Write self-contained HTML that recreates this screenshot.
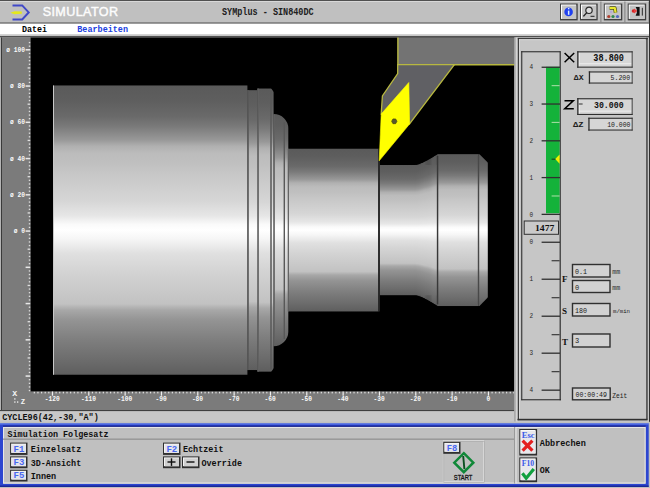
<!DOCTYPE html>
<html><head><meta charset="utf-8"><style>
html,body{margin:0;padding:0;width:650px;height:488px;overflow:hidden;background:#c0c0c0}
svg{display:block}
</style></head><body>
<svg width="650" height="488" viewBox="0 0 650 488">
<rect x="0" y="0" width="650" height="488" fill="#c0c0c0"/>
<rect x="0" y="0" width="650" height="1" fill="#505050"/>
<rect x="0" y="1" width="650" height="1" fill="#d8d8d8"/>
<rect x="0" y="22.5" width="650" height="1.2" fill="#505050"/>
<path d="M12.5 5.4 H22.2 L28.7 12.4 L22.2 19.4 H12.5" fill="none" stroke="#4048c8" stroke-width="2"/>
<path d="M10.3 12.7 L14.5 11.2 L21.8 11.6 L21.8 13.8 L14.5 14.2 Z" fill="#e4e81c"/>
<text x="42.7" y="16" font-size="12.6" fill="#fcfcfc" font-family="Liberation Sans" textLength="75.3" lengthAdjust="spacing" stroke="#fcfcfc" stroke-width="0.45">SIMULATOR</text>
<text x="222" y="15" font-size="10.6" fill="#202020" font-family="Liberation Mono" font-weight="bold" textLength="91.6" lengthAdjust="spacingAndGlyphs" >SYMplus - SIN840DC</text>
<rect x="560" y="3.5" width="17.700000000000045" height="16.9" fill="#404040"/>
<rect x="561" y="4.5" width="15.200000000000045" height="14.399999999999999" fill="#ffffff"/>
<rect x="562" y="5.5" width="14.200000000000045" height="13.399999999999999" fill="#c4c4c4"/>
<rect x="580" y="3.5" width="17.700000000000045" height="16.9" fill="#404040"/>
<rect x="581" y="4.5" width="15.200000000000045" height="14.399999999999999" fill="#ffffff"/>
<rect x="582" y="5.5" width="14.200000000000045" height="13.399999999999999" fill="#c4c4c4"/>
<rect x="603.8" y="3.5" width="18.5" height="16.9" fill="#404040"/>
<rect x="604.8" y="4.5" width="16.0" height="14.399999999999999" fill="#ffffff"/>
<rect x="605.8" y="5.5" width="15.0" height="13.399999999999999" fill="#c4c4c4"/>
<rect x="627.7" y="3.5" width="18.5" height="16.9" fill="#404040"/>
<rect x="628.7" y="4.5" width="16.0" height="14.399999999999999" fill="#ffffff"/>
<rect x="629.7" y="5.5" width="15.0" height="13.399999999999999" fill="#c4c4c4"/>
<rect x="600.4" y="1.5" width="1" height="21" fill="#808080"/>
<rect x="624.4" y="1.5" width="1" height="21" fill="#808080"/>
<rect x="648.5" y="1.5" width="1" height="21" fill="#808080"/>
<circle cx="568.6" cy="11.9" r="4.3" fill="#2040f0"/>
<rect x="567.9" y="10.6" width="1.5" height="4.2" fill="#d8ecff"/><rect x="567.9" y="7.9" width="1.5" height="1.4" fill="#d8ecff"/>
<circle cx="589" cy="10.3" r="3.2" fill="#dcdcdc" stroke="#282828" stroke-width="1.2"/>
<path d="M586.8 12.6 L583.4 16.4" stroke="#202020" stroke-width="1.4"/>
<rect x="590.5" y="15.8" width="4" height="1" fill="#202020"/>
<path d="M609.6 8 H614.8 L615.6 12.6" fill="none" stroke="#505010" stroke-width="3.6" stroke-linejoin="round"/>
<path d="M609.6 8 H614.8 L615.6 12.6" fill="none" stroke="#e8e830" stroke-width="2.2" stroke-linejoin="round"/>
<ellipse cx="608.8" cy="16.5" rx="1.6" ry="1.5" fill="#b04030"/><ellipse cx="613" cy="16.5" rx="1.6" ry="1.5" fill="#308850"/><ellipse cx="617.5" cy="16.5" rx="1.6" ry="1.5" fill="#5068c0"/><circle cx="611" cy="12" r="1.2" fill="#b8a8d8"/>
<circle cx="633.4" cy="11" r="1.7" fill="#d82828"/><polygon points="634,8.6 637.4,11 634,13.4" fill="#e84040"/>
<path d="M635.6 7.1 H639.6 V15.7 H635.6 Q638.6 11.4 635.6 7.1 Z" fill="#101010"/>
<rect x="641.8" y="7.8" width="1.1" height="7.8" fill="#383838"/>
<rect x="0" y="23.7" width="650" height="10.8" fill="#ffffff"/>
<text x="22" y="32" font-size="9.5" fill="#000" font-family="Liberation Mono" font-weight="bold" textLength="25" lengthAdjust="spacingAndGlyphs" >Datei</text>
<text x="77.3" y="32" font-size="9.5" fill="#2040e0" font-family="Liberation Mono" font-weight="bold" textLength="50.7" lengthAdjust="spacingAndGlyphs" >Bearbeiten</text>
<rect x="0" y="34.5" width="650" height="1.5" fill="#c8c8c8"/>
<rect x="0" y="36" width="650" height="1.5" fill="#505050"/>
<rect x="0" y="37.5" width="30.5" height="373" fill="#7b7b7b"/>
<rect x="0" y="391.5" width="514.5" height="19" fill="#7b7b7b"/>
<rect x="0" y="37.5" width="1" height="373" fill="#b4b4b4"/>
<rect x="1" y="37.5" width="1" height="373" fill="#3a3a3a"/>
<rect x="30.5" y="37.5" width="484" height="354" fill="#000"/>
<rect x="0" y="410" width="514.5" height="1.3" fill="#404040"/>
<rect x="0" y="411.3" width="514.5" height="10.5" fill="#c8c8c8"/>
<text x="2.2" y="419.5" font-size="9.5" fill="#101010" font-family="Liberation Mono" font-weight="bold" textLength="96.6" lengthAdjust="spacingAndGlyphs" >CYCLE96(42,-30,"A")</text>
<rect x="28.8" y="389.93" width="1.4" height="1.3" fill="#e0e0e0"/>
<rect x="28.8" y="386.30" width="1.4" height="1.3" fill="#e0e0e0"/>
<rect x="28.8" y="382.68" width="1.4" height="1.3" fill="#e0e0e0"/>
<rect x="28.8" y="379.05" width="1.4" height="1.3" fill="#e0e0e0"/>
<rect x="25.6" y="375.33" width="4.6" height="1.5" fill="#e8e8e8"/>
<rect x="28.8" y="371.80" width="1.4" height="1.3" fill="#e0e0e0"/>
<rect x="28.8" y="368.18" width="1.4" height="1.3" fill="#e0e0e0"/>
<rect x="28.8" y="364.55" width="1.4" height="1.3" fill="#e0e0e0"/>
<rect x="28.8" y="360.93" width="1.4" height="1.3" fill="#e0e0e0"/>
<rect x="27.6" y="357.30" width="2.6" height="1.3" fill="#e0e0e0"/>
<rect x="28.8" y="353.68" width="1.4" height="1.3" fill="#e0e0e0"/>
<rect x="28.8" y="350.05" width="1.4" height="1.3" fill="#e0e0e0"/>
<rect x="28.8" y="346.43" width="1.4" height="1.3" fill="#e0e0e0"/>
<rect x="28.8" y="342.80" width="1.4" height="1.3" fill="#e0e0e0"/>
<rect x="25.6" y="339.08" width="4.6" height="1.5" fill="#e8e8e8"/>
<rect x="28.8" y="335.55" width="1.4" height="1.3" fill="#e0e0e0"/>
<rect x="28.8" y="331.93" width="1.4" height="1.3" fill="#e0e0e0"/>
<rect x="28.8" y="328.30" width="1.4" height="1.3" fill="#e0e0e0"/>
<rect x="28.8" y="324.68" width="1.4" height="1.3" fill="#e0e0e0"/>
<rect x="27.6" y="321.05" width="2.6" height="1.3" fill="#e0e0e0"/>
<rect x="28.8" y="317.42" width="1.4" height="1.3" fill="#e0e0e0"/>
<rect x="28.8" y="313.80" width="1.4" height="1.3" fill="#e0e0e0"/>
<rect x="28.8" y="310.17" width="1.4" height="1.3" fill="#e0e0e0"/>
<rect x="28.8" y="306.55" width="1.4" height="1.3" fill="#e0e0e0"/>
<rect x="25.6" y="302.82" width="4.6" height="1.5" fill="#e8e8e8"/>
<rect x="28.8" y="299.30" width="1.4" height="1.3" fill="#e0e0e0"/>
<rect x="28.8" y="295.67" width="1.4" height="1.3" fill="#e0e0e0"/>
<rect x="28.8" y="292.05" width="1.4" height="1.3" fill="#e0e0e0"/>
<rect x="28.8" y="288.42" width="1.4" height="1.3" fill="#e0e0e0"/>
<rect x="27.6" y="284.80" width="2.6" height="1.3" fill="#e0e0e0"/>
<rect x="28.8" y="281.17" width="1.4" height="1.3" fill="#e0e0e0"/>
<rect x="28.8" y="277.55" width="1.4" height="1.3" fill="#e0e0e0"/>
<rect x="28.8" y="273.92" width="1.4" height="1.3" fill="#e0e0e0"/>
<rect x="28.8" y="270.30" width="1.4" height="1.3" fill="#e0e0e0"/>
<rect x="25.6" y="266.57" width="4.6" height="1.5" fill="#e8e8e8"/>
<rect x="28.8" y="263.05" width="1.4" height="1.3" fill="#e0e0e0"/>
<rect x="28.8" y="259.42" width="1.4" height="1.3" fill="#e0e0e0"/>
<rect x="28.8" y="255.80" width="1.4" height="1.3" fill="#e0e0e0"/>
<rect x="28.8" y="252.17" width="1.4" height="1.3" fill="#e0e0e0"/>
<rect x="27.6" y="248.55" width="2.6" height="1.3" fill="#e0e0e0"/>
<rect x="28.8" y="244.92" width="1.4" height="1.3" fill="#e0e0e0"/>
<rect x="28.8" y="241.30" width="1.4" height="1.3" fill="#e0e0e0"/>
<rect x="28.8" y="237.67" width="1.4" height="1.3" fill="#e0e0e0"/>
<rect x="28.8" y="234.05" width="1.4" height="1.3" fill="#e0e0e0"/>
<rect x="25.6" y="230.32" width="4.6" height="1.5" fill="#e8e8e8"/>
<rect x="28.8" y="226.79" width="1.4" height="1.3" fill="#e0e0e0"/>
<rect x="28.8" y="223.17" width="1.4" height="1.3" fill="#e0e0e0"/>
<rect x="28.8" y="219.54" width="1.4" height="1.3" fill="#e0e0e0"/>
<rect x="28.8" y="215.92" width="1.4" height="1.3" fill="#e0e0e0"/>
<rect x="27.6" y="212.29" width="2.6" height="1.3" fill="#e0e0e0"/>
<rect x="28.8" y="208.67" width="1.4" height="1.3" fill="#e0e0e0"/>
<rect x="28.8" y="205.04" width="1.4" height="1.3" fill="#e0e0e0"/>
<rect x="28.8" y="201.42" width="1.4" height="1.3" fill="#e0e0e0"/>
<rect x="28.8" y="197.79" width="1.4" height="1.3" fill="#e0e0e0"/>
<rect x="25.6" y="194.07" width="4.6" height="1.5" fill="#e8e8e8"/>
<rect x="28.8" y="190.54" width="1.4" height="1.3" fill="#e0e0e0"/>
<rect x="28.8" y="186.92" width="1.4" height="1.3" fill="#e0e0e0"/>
<rect x="28.8" y="183.29" width="1.4" height="1.3" fill="#e0e0e0"/>
<rect x="28.8" y="179.67" width="1.4" height="1.3" fill="#e0e0e0"/>
<rect x="27.6" y="176.04" width="2.6" height="1.3" fill="#e0e0e0"/>
<rect x="28.8" y="172.42" width="1.4" height="1.3" fill="#e0e0e0"/>
<rect x="28.8" y="168.79" width="1.4" height="1.3" fill="#e0e0e0"/>
<rect x="28.8" y="165.17" width="1.4" height="1.3" fill="#e0e0e0"/>
<rect x="28.8" y="161.54" width="1.4" height="1.3" fill="#e0e0e0"/>
<rect x="25.6" y="157.82" width="4.6" height="1.5" fill="#e8e8e8"/>
<rect x="28.8" y="154.29" width="1.4" height="1.3" fill="#e0e0e0"/>
<rect x="28.8" y="150.67" width="1.4" height="1.3" fill="#e0e0e0"/>
<rect x="28.8" y="147.04" width="1.4" height="1.3" fill="#e0e0e0"/>
<rect x="28.8" y="143.42" width="1.4" height="1.3" fill="#e0e0e0"/>
<rect x="27.6" y="139.79" width="2.6" height="1.3" fill="#e0e0e0"/>
<rect x="28.8" y="136.16" width="1.4" height="1.3" fill="#e0e0e0"/>
<rect x="28.8" y="132.54" width="1.4" height="1.3" fill="#e0e0e0"/>
<rect x="28.8" y="128.91" width="1.4" height="1.3" fill="#e0e0e0"/>
<rect x="28.8" y="125.29" width="1.4" height="1.3" fill="#e0e0e0"/>
<rect x="25.6" y="121.56" width="4.6" height="1.5" fill="#e8e8e8"/>
<rect x="28.8" y="118.04" width="1.4" height="1.3" fill="#e0e0e0"/>
<rect x="28.8" y="114.41" width="1.4" height="1.3" fill="#e0e0e0"/>
<rect x="28.8" y="110.79" width="1.4" height="1.3" fill="#e0e0e0"/>
<rect x="28.8" y="107.16" width="1.4" height="1.3" fill="#e0e0e0"/>
<rect x="27.6" y="103.54" width="2.6" height="1.3" fill="#e0e0e0"/>
<rect x="28.8" y="99.91" width="1.4" height="1.3" fill="#e0e0e0"/>
<rect x="28.8" y="96.29" width="1.4" height="1.3" fill="#e0e0e0"/>
<rect x="28.8" y="92.66" width="1.4" height="1.3" fill="#e0e0e0"/>
<rect x="28.8" y="89.04" width="1.4" height="1.3" fill="#e0e0e0"/>
<rect x="25.6" y="85.31" width="4.6" height="1.5" fill="#e8e8e8"/>
<rect x="28.8" y="81.79" width="1.4" height="1.3" fill="#e0e0e0"/>
<rect x="28.8" y="78.16" width="1.4" height="1.3" fill="#e0e0e0"/>
<rect x="28.8" y="74.54" width="1.4" height="1.3" fill="#e0e0e0"/>
<rect x="28.8" y="70.91" width="1.4" height="1.3" fill="#e0e0e0"/>
<rect x="27.6" y="67.29" width="2.6" height="1.3" fill="#e0e0e0"/>
<rect x="28.8" y="63.66" width="1.4" height="1.3" fill="#e0e0e0"/>
<rect x="28.8" y="60.04" width="1.4" height="1.3" fill="#e0e0e0"/>
<rect x="28.8" y="56.41" width="1.4" height="1.3" fill="#e0e0e0"/>
<rect x="28.8" y="52.79" width="1.4" height="1.3" fill="#e0e0e0"/>
<rect x="25.6" y="49.06" width="4.6" height="1.5" fill="#e8e8e8"/>
<rect x="28.8" y="45.53" width="1.4" height="1.3" fill="#e0e0e0"/>
<rect x="28.8" y="41.91" width="1.4" height="1.3" fill="#e0e0e0"/>
<text x="6.25" y="51.81" font-size="7.3" fill="#fafafa" font-family="Liberation Mono" font-weight="bold" textLength="18.75" lengthAdjust="spacingAndGlyphs" >ø 100</text>
<text x="10.0" y="88.06199999999998" font-size="7.3" fill="#fafafa" font-family="Liberation Mono" font-weight="bold" textLength="15.0" lengthAdjust="spacingAndGlyphs" >ø 80</text>
<text x="10.0" y="124.314" font-size="7.3" fill="#fafafa" font-family="Liberation Mono" font-weight="bold" textLength="15.0" lengthAdjust="spacingAndGlyphs" >ø 60</text>
<text x="10.0" y="160.56599999999997" font-size="7.3" fill="#fafafa" font-family="Liberation Mono" font-weight="bold" textLength="15.0" lengthAdjust="spacingAndGlyphs" >ø 40</text>
<text x="10.0" y="196.81799999999998" font-size="7.3" fill="#fafafa" font-family="Liberation Mono" font-weight="bold" textLength="15.0" lengthAdjust="spacingAndGlyphs" >ø 20</text>
<text x="13.75" y="233.07" font-size="7.3" fill="#fafafa" font-family="Liberation Mono" font-weight="bold" textLength="11.25" lengthAdjust="spacingAndGlyphs" >ø 0</text>
<text x="12.3" y="396.2" font-size="7.5" fill="#f4f4f4" font-family="Liberation Mono" font-weight="bold" textLength="5" lengthAdjust="spacingAndGlyphs" >X</text>
<text x="20.8" y="403.6" font-size="7.5" fill="#f4f4f4" font-family="Liberation Mono" font-weight="bold" textLength="4.4" lengthAdjust="spacingAndGlyphs" >Z</text>
<rect x="14.2" y="398.3" width="1.3" height="1.3" fill="#f4f4f4"/><rect x="14.2" y="401.4" width="1.3" height="1.3" fill="#f4f4f4"/><rect x="17" y="401.4" width="1.3" height="1.3" fill="#f4f4f4"/>
<rect x="33.71" y="391.8" width="1.2" height="1.6" fill="#e0e0e0"/>
<rect x="37.35" y="391.8" width="1.2" height="1.6" fill="#e0e0e0"/>
<rect x="40.98" y="391.8" width="1.2" height="1.6" fill="#e0e0e0"/>
<rect x="44.61" y="391.8" width="1.2" height="1.6" fill="#e0e0e0"/>
<rect x="48.24" y="391.8" width="1.2" height="1.6" fill="#e0e0e0"/>
<rect x="51.88" y="391.5" width="1.2" height="4.2" fill="#f0f0f0"/>
<rect x="55.51" y="391.8" width="1.2" height="1.6" fill="#e0e0e0"/>
<rect x="59.14" y="391.8" width="1.2" height="1.6" fill="#e0e0e0"/>
<rect x="62.78" y="391.8" width="1.2" height="1.6" fill="#e0e0e0"/>
<rect x="66.41" y="391.8" width="1.2" height="1.6" fill="#e0e0e0"/>
<rect x="70.04" y="391.8" width="1.2" height="1.6" fill="#e0e0e0"/>
<rect x="73.68" y="391.8" width="1.2" height="1.6" fill="#e0e0e0"/>
<rect x="77.31" y="391.8" width="1.2" height="1.6" fill="#e0e0e0"/>
<rect x="80.94" y="391.8" width="1.2" height="1.6" fill="#e0e0e0"/>
<rect x="84.58" y="391.8" width="1.2" height="1.6" fill="#e0e0e0"/>
<rect x="88.21" y="391.5" width="1.2" height="4.2" fill="#f0f0f0"/>
<rect x="91.84" y="391.8" width="1.2" height="1.6" fill="#e0e0e0"/>
<rect x="95.48" y="391.8" width="1.2" height="1.6" fill="#e0e0e0"/>
<rect x="99.11" y="391.8" width="1.2" height="1.6" fill="#e0e0e0"/>
<rect x="102.74" y="391.8" width="1.2" height="1.6" fill="#e0e0e0"/>
<rect x="106.37" y="391.8" width="1.2" height="1.6" fill="#e0e0e0"/>
<rect x="110.01" y="391.8" width="1.2" height="1.6" fill="#e0e0e0"/>
<rect x="113.64" y="391.8" width="1.2" height="1.6" fill="#e0e0e0"/>
<rect x="117.27" y="391.8" width="1.2" height="1.6" fill="#e0e0e0"/>
<rect x="120.91" y="391.8" width="1.2" height="1.6" fill="#e0e0e0"/>
<rect x="124.54" y="391.5" width="1.2" height="4.2" fill="#f0f0f0"/>
<rect x="128.17" y="391.8" width="1.2" height="1.6" fill="#e0e0e0"/>
<rect x="131.81" y="391.8" width="1.2" height="1.6" fill="#e0e0e0"/>
<rect x="135.44" y="391.8" width="1.2" height="1.6" fill="#e0e0e0"/>
<rect x="139.07" y="391.8" width="1.2" height="1.6" fill="#e0e0e0"/>
<rect x="142.71" y="391.8" width="1.2" height="1.6" fill="#e0e0e0"/>
<rect x="146.34" y="391.8" width="1.2" height="1.6" fill="#e0e0e0"/>
<rect x="149.97" y="391.8" width="1.2" height="1.6" fill="#e0e0e0"/>
<rect x="153.60" y="391.8" width="1.2" height="1.6" fill="#e0e0e0"/>
<rect x="157.24" y="391.8" width="1.2" height="1.6" fill="#e0e0e0"/>
<rect x="160.87" y="391.5" width="1.2" height="4.2" fill="#f0f0f0"/>
<rect x="164.50" y="391.8" width="1.2" height="1.6" fill="#e0e0e0"/>
<rect x="168.14" y="391.8" width="1.2" height="1.6" fill="#e0e0e0"/>
<rect x="171.77" y="391.8" width="1.2" height="1.6" fill="#e0e0e0"/>
<rect x="175.40" y="391.8" width="1.2" height="1.6" fill="#e0e0e0"/>
<rect x="179.04" y="391.8" width="1.2" height="1.6" fill="#e0e0e0"/>
<rect x="182.67" y="391.8" width="1.2" height="1.6" fill="#e0e0e0"/>
<rect x="186.30" y="391.8" width="1.2" height="1.6" fill="#e0e0e0"/>
<rect x="189.94" y="391.8" width="1.2" height="1.6" fill="#e0e0e0"/>
<rect x="193.57" y="391.8" width="1.2" height="1.6" fill="#e0e0e0"/>
<rect x="197.20" y="391.5" width="1.2" height="4.2" fill="#f0f0f0"/>
<rect x="200.84" y="391.8" width="1.2" height="1.6" fill="#e0e0e0"/>
<rect x="204.47" y="391.8" width="1.2" height="1.6" fill="#e0e0e0"/>
<rect x="208.10" y="391.8" width="1.2" height="1.6" fill="#e0e0e0"/>
<rect x="211.73" y="391.8" width="1.2" height="1.6" fill="#e0e0e0"/>
<rect x="215.37" y="391.8" width="1.2" height="1.6" fill="#e0e0e0"/>
<rect x="219.00" y="391.8" width="1.2" height="1.6" fill="#e0e0e0"/>
<rect x="222.63" y="391.8" width="1.2" height="1.6" fill="#e0e0e0"/>
<rect x="226.27" y="391.8" width="1.2" height="1.6" fill="#e0e0e0"/>
<rect x="229.90" y="391.8" width="1.2" height="1.6" fill="#e0e0e0"/>
<rect x="233.53" y="391.5" width="1.2" height="4.2" fill="#f0f0f0"/>
<rect x="237.17" y="391.8" width="1.2" height="1.6" fill="#e0e0e0"/>
<rect x="240.80" y="391.8" width="1.2" height="1.6" fill="#e0e0e0"/>
<rect x="244.43" y="391.8" width="1.2" height="1.6" fill="#e0e0e0"/>
<rect x="248.07" y="391.8" width="1.2" height="1.6" fill="#e0e0e0"/>
<rect x="251.70" y="391.8" width="1.2" height="1.6" fill="#e0e0e0"/>
<rect x="255.33" y="391.8" width="1.2" height="1.6" fill="#e0e0e0"/>
<rect x="258.96" y="391.8" width="1.2" height="1.6" fill="#e0e0e0"/>
<rect x="262.60" y="391.8" width="1.2" height="1.6" fill="#e0e0e0"/>
<rect x="266.23" y="391.8" width="1.2" height="1.6" fill="#e0e0e0"/>
<rect x="269.86" y="391.5" width="1.2" height="4.2" fill="#f0f0f0"/>
<rect x="273.50" y="391.8" width="1.2" height="1.6" fill="#e0e0e0"/>
<rect x="277.13" y="391.8" width="1.2" height="1.6" fill="#e0e0e0"/>
<rect x="280.76" y="391.8" width="1.2" height="1.6" fill="#e0e0e0"/>
<rect x="284.40" y="391.8" width="1.2" height="1.6" fill="#e0e0e0"/>
<rect x="288.03" y="391.8" width="1.2" height="1.6" fill="#e0e0e0"/>
<rect x="291.66" y="391.8" width="1.2" height="1.6" fill="#e0e0e0"/>
<rect x="295.30" y="391.8" width="1.2" height="1.6" fill="#e0e0e0"/>
<rect x="298.93" y="391.8" width="1.2" height="1.6" fill="#e0e0e0"/>
<rect x="302.56" y="391.8" width="1.2" height="1.6" fill="#e0e0e0"/>
<rect x="306.19" y="391.5" width="1.2" height="4.2" fill="#f0f0f0"/>
<rect x="309.83" y="391.8" width="1.2" height="1.6" fill="#e0e0e0"/>
<rect x="313.46" y="391.8" width="1.2" height="1.6" fill="#e0e0e0"/>
<rect x="317.09" y="391.8" width="1.2" height="1.6" fill="#e0e0e0"/>
<rect x="320.73" y="391.8" width="1.2" height="1.6" fill="#e0e0e0"/>
<rect x="324.36" y="391.8" width="1.2" height="1.6" fill="#e0e0e0"/>
<rect x="327.99" y="391.8" width="1.2" height="1.6" fill="#e0e0e0"/>
<rect x="331.63" y="391.8" width="1.2" height="1.6" fill="#e0e0e0"/>
<rect x="335.26" y="391.8" width="1.2" height="1.6" fill="#e0e0e0"/>
<rect x="338.89" y="391.8" width="1.2" height="1.6" fill="#e0e0e0"/>
<rect x="342.53" y="391.5" width="1.2" height="4.2" fill="#f0f0f0"/>
<rect x="346.16" y="391.8" width="1.2" height="1.6" fill="#e0e0e0"/>
<rect x="349.79" y="391.8" width="1.2" height="1.6" fill="#e0e0e0"/>
<rect x="353.43" y="391.8" width="1.2" height="1.6" fill="#e0e0e0"/>
<rect x="357.06" y="391.8" width="1.2" height="1.6" fill="#e0e0e0"/>
<rect x="360.69" y="391.8" width="1.2" height="1.6" fill="#e0e0e0"/>
<rect x="364.32" y="391.8" width="1.2" height="1.6" fill="#e0e0e0"/>
<rect x="367.96" y="391.8" width="1.2" height="1.6" fill="#e0e0e0"/>
<rect x="371.59" y="391.8" width="1.2" height="1.6" fill="#e0e0e0"/>
<rect x="375.22" y="391.8" width="1.2" height="1.6" fill="#e0e0e0"/>
<rect x="378.86" y="391.5" width="1.2" height="4.2" fill="#f0f0f0"/>
<rect x="382.49" y="391.8" width="1.2" height="1.6" fill="#e0e0e0"/>
<rect x="386.12" y="391.8" width="1.2" height="1.6" fill="#e0e0e0"/>
<rect x="389.76" y="391.8" width="1.2" height="1.6" fill="#e0e0e0"/>
<rect x="393.39" y="391.8" width="1.2" height="1.6" fill="#e0e0e0"/>
<rect x="397.02" y="391.8" width="1.2" height="1.6" fill="#e0e0e0"/>
<rect x="400.66" y="391.8" width="1.2" height="1.6" fill="#e0e0e0"/>
<rect x="404.29" y="391.8" width="1.2" height="1.6" fill="#e0e0e0"/>
<rect x="407.92" y="391.8" width="1.2" height="1.6" fill="#e0e0e0"/>
<rect x="411.55" y="391.8" width="1.2" height="1.6" fill="#e0e0e0"/>
<rect x="415.19" y="391.5" width="1.2" height="4.2" fill="#f0f0f0"/>
<rect x="418.82" y="391.8" width="1.2" height="1.6" fill="#e0e0e0"/>
<rect x="422.45" y="391.8" width="1.2" height="1.6" fill="#e0e0e0"/>
<rect x="426.09" y="391.8" width="1.2" height="1.6" fill="#e0e0e0"/>
<rect x="429.72" y="391.8" width="1.2" height="1.6" fill="#e0e0e0"/>
<rect x="433.35" y="391.8" width="1.2" height="1.6" fill="#e0e0e0"/>
<rect x="436.99" y="391.8" width="1.2" height="1.6" fill="#e0e0e0"/>
<rect x="440.62" y="391.8" width="1.2" height="1.6" fill="#e0e0e0"/>
<rect x="444.25" y="391.8" width="1.2" height="1.6" fill="#e0e0e0"/>
<rect x="447.89" y="391.8" width="1.2" height="1.6" fill="#e0e0e0"/>
<rect x="451.52" y="391.5" width="1.2" height="4.2" fill="#f0f0f0"/>
<rect x="455.15" y="391.8" width="1.2" height="1.6" fill="#e0e0e0"/>
<rect x="458.79" y="391.8" width="1.2" height="1.6" fill="#e0e0e0"/>
<rect x="462.42" y="391.8" width="1.2" height="1.6" fill="#e0e0e0"/>
<rect x="466.05" y="391.8" width="1.2" height="1.6" fill="#e0e0e0"/>
<rect x="469.68" y="391.8" width="1.2" height="1.6" fill="#e0e0e0"/>
<rect x="473.32" y="391.8" width="1.2" height="1.6" fill="#e0e0e0"/>
<rect x="476.95" y="391.8" width="1.2" height="1.6" fill="#e0e0e0"/>
<rect x="480.58" y="391.8" width="1.2" height="1.6" fill="#e0e0e0"/>
<rect x="484.22" y="391.8" width="1.2" height="1.6" fill="#e0e0e0"/>
<rect x="487.85" y="391.5" width="1.2" height="4.2" fill="#f0f0f0"/>
<rect x="491.48" y="391.8" width="1.2" height="1.6" fill="#e0e0e0"/>
<rect x="495.12" y="391.8" width="1.2" height="1.6" fill="#e0e0e0"/>
<rect x="498.75" y="391.8" width="1.2" height="1.6" fill="#e0e0e0"/>
<rect x="502.38" y="391.8" width="1.2" height="1.6" fill="#e0e0e0"/>
<rect x="506.02" y="391.8" width="1.2" height="1.6" fill="#e0e0e0"/>
<rect x="509.65" y="391.8" width="1.2" height="1.6" fill="#e0e0e0"/>
<rect x="513.28" y="391.8" width="1.2" height="1.6" fill="#e0e0e0"/>
<text x="44.677999999999955" y="400.6" font-size="7" fill="#f8f8f8" font-family="Liberation Mono" font-weight="bold" textLength="15.0" lengthAdjust="spacingAndGlyphs" >-120</text>
<text x="81.00899999999997" y="400.6" font-size="7" fill="#f8f8f8" font-family="Liberation Mono" font-weight="bold" textLength="15.0" lengthAdjust="spacingAndGlyphs" >-110</text>
<text x="117.33999999999999" y="400.6" font-size="7" fill="#f8f8f8" font-family="Liberation Mono" font-weight="bold" textLength="15.0" lengthAdjust="spacingAndGlyphs" >-100</text>
<text x="155.54599999999994" y="400.6" font-size="7" fill="#f8f8f8" font-family="Liberation Mono" font-weight="bold" textLength="11.25" lengthAdjust="spacingAndGlyphs" >-90</text>
<text x="191.87699999999995" y="400.6" font-size="7" fill="#f8f8f8" font-family="Liberation Mono" font-weight="bold" textLength="11.25" lengthAdjust="spacingAndGlyphs" >-80</text>
<text x="228.20799999999997" y="400.6" font-size="7" fill="#f8f8f8" font-family="Liberation Mono" font-weight="bold" textLength="11.25" lengthAdjust="spacingAndGlyphs" >-70</text>
<text x="264.53899999999993" y="400.6" font-size="7" fill="#f8f8f8" font-family="Liberation Mono" font-weight="bold" textLength="11.25" lengthAdjust="spacingAndGlyphs" >-60</text>
<text x="300.86999999999995" y="400.6" font-size="7" fill="#f8f8f8" font-family="Liberation Mono" font-weight="bold" textLength="11.25" lengthAdjust="spacingAndGlyphs" >-50</text>
<text x="337.20099999999996" y="400.6" font-size="7" fill="#f8f8f8" font-family="Liberation Mono" font-weight="bold" textLength="11.25" lengthAdjust="spacingAndGlyphs" >-40</text>
<text x="373.532" y="400.6" font-size="7" fill="#f8f8f8" font-family="Liberation Mono" font-weight="bold" textLength="11.25" lengthAdjust="spacingAndGlyphs" >-30</text>
<text x="409.863" y="400.6" font-size="7" fill="#f8f8f8" font-family="Liberation Mono" font-weight="bold" textLength="11.25" lengthAdjust="spacingAndGlyphs" >-20</text>
<text x="446.19399999999996" y="400.6" font-size="7" fill="#f8f8f8" font-family="Liberation Mono" font-weight="bold" textLength="11.25" lengthAdjust="spacingAndGlyphs" >-10</text>
<text x="486.575" y="400.6" font-size="7" fill="#f8f8f8" font-family="Liberation Mono" font-weight="bold" textLength="3.75" lengthAdjust="spacingAndGlyphs" >0</text>
<defs>
<linearGradient id="cyl" x1="0" y1="0" x2="0" y2="1">
<stop offset="0" stop-color="#5a5a5a"/>
<stop offset="0.05" stop-color="#5e5e5e"/>
<stop offset="0.108" stop-color="#6a6a6a"/>
<stop offset="0.142" stop-color="#7a7a7a"/>
<stop offset="0.188" stop-color="#989898"/>
<stop offset="0.21" stop-color="#b0b0b0"/>
<stop offset="0.235" stop-color="#bcbcbc"/>
<stop offset="0.27" stop-color="#c0c0c0"/>
<stop offset="0.30" stop-color="#c6c6c6"/>
<stop offset="0.40" stop-color="#d6d6d6"/>
<stop offset="0.45" stop-color="#e6e6e6"/>
<stop offset="0.48" stop-color="#fafafa"/>
<stop offset="0.50" stop-color="#ffffff"/>
<stop offset="0.53" stop-color="#f6f6f6"/>
<stop offset="0.58" stop-color="#e0e0e0"/>
<stop offset="0.64" stop-color="#d4d4d4"/>
<stop offset="0.755" stop-color="#c2c2c2"/>
<stop offset="0.776" stop-color="#a8a8a8"/>
<stop offset="0.81" stop-color="#949494"/>
<stop offset="0.88" stop-color="#7e7e7e"/>
<stop offset="0.95" stop-color="#6c6c6c"/>
<stop offset="1" stop-color="#5e5e5e"/>
</linearGradient>
</defs>
<rect x="53" y="85.46" width="194.40" height="289.28" fill="url(#cyl)"/>
<rect x="247.4" y="90.16" width="10.00" height="279.88" fill="url(#cyl)"/>
<rect x="257.4" y="88.53" width="16.20" height="283.13" fill="url(#cyl)"/>
<path d="M273.6 114.03 A14.7 14.3 0 0 1 288.3 128.33 V331.87 A14.7 14.3 0 0 1 273.6 346.17 Z" fill="url(#cyl)"/>
<rect x="288.4" y="148.74" width="90.10" height="162.72" fill="url(#cyl)"/>
<rect x="379.5" y="165.01" width="58.00" height="130.18" fill="url(#cyl)"/>
<rect x="437.5" y="154.16" width="41.00" height="151.87" fill="url(#cyl)"/>
<rect x="478.5" y="154.16" width="9.30" height="151.87" fill="url(#cyl)"/>
<rect x="53.00" y="85.46" width="1" height="289.28" fill="#c8c8c8"/>
<rect x="247.20" y="90.16" width="1.6" height="279.88" fill="#585858"/>
<rect x="257.35" y="88.53" width="1.5" height="283.13" fill="#606060"/>
<rect x="270.25" y="90.88" width="1.5" height="278.43" fill="#585858"/>
<rect x="273.35" y="114.39" width="1.5" height="231.42" fill="#606060"/>
<rect x="287.70" y="148.74" width="1.2" height="162.72" fill="#606060"/>
<rect x="378.10" y="148.74" width="1.8" height="162.72" fill="#282828"/>
<rect x="436.85" y="155.97" width="1.3" height="148.26" fill="#383838"/>
<rect x="477.80" y="155.97" width="1.4" height="148.26" fill="#484848"/>
<rect x="415.5" y="164.86" width="1.22" height="130.47" fill="url(#cyl)"/>
<rect x="416.42" y="164.63" width="1.21" height="130.93" fill="url(#cyl)"/>
<rect x="417.33" y="164.36" width="1.22" height="131.49" fill="url(#cyl)"/>
<rect x="418.25" y="164.05" width="1.22" height="132.11" fill="url(#cyl)"/>
<rect x="419.17" y="163.71" width="1.21" height="132.79" fill="url(#cyl)"/>
<rect x="420.08" y="163.34" width="1.22" height="133.51" fill="url(#cyl)"/>
<rect x="421.0" y="162.96" width="1.22" height="134.29" fill="url(#cyl)"/>
<rect x="421.92" y="162.55" width="1.21" height="135.10" fill="url(#cyl)"/>
<rect x="422.83" y="162.13" width="1.22" height="135.95" fill="url(#cyl)"/>
<rect x="423.75" y="161.68" width="1.22" height="136.83" fill="url(#cyl)"/>
<rect x="424.67" y="161.23" width="1.21" height="137.74" fill="url(#cyl)"/>
<rect x="425.58" y="160.76" width="1.22" height="138.69" fill="url(#cyl)"/>
<rect x="426.5" y="160.27" width="1.22" height="139.66" fill="url(#cyl)"/>
<rect x="427.42" y="159.77" width="1.21" height="140.66" fill="url(#cyl)"/>
<rect x="428.33" y="159.26" width="1.22" height="141.68" fill="url(#cyl)"/>
<rect x="429.25" y="158.74" width="1.22" height="142.73" fill="url(#cyl)"/>
<rect x="430.17" y="158.20" width="1.21" height="143.80" fill="url(#cyl)"/>
<rect x="431.08" y="157.66" width="1.22" height="144.89" fill="url(#cyl)"/>
<rect x="432.0" y="157.10" width="1.22" height="146.00" fill="url(#cyl)"/>
<rect x="432.92" y="156.53" width="1.21" height="147.14" fill="url(#cyl)"/>
<rect x="433.83" y="155.95" width="1.22" height="148.29" fill="url(#cyl)"/>
<rect x="434.75" y="155.37" width="1.22" height="149.47" fill="url(#cyl)"/>
<rect x="435.67" y="154.77" width="1.21" height="150.66" fill="url(#cyl)"/>
<rect x="436.58" y="154.16" width="1.22" height="151.87" fill="url(#cyl)"/>
<polygon points="415.50,165.01 416.60,164.82 417.70,164.53 418.80,164.17 419.90,163.78 421.00,163.34 422.10,162.88 423.20,162.38 424.30,161.86 425.40,161.32 426.50,160.76 427.60,160.17 428.70,159.57 429.80,158.95 430.90,158.31 432.00,157.66 433.10,156.99 434.20,156.30 435.30,155.60 436.40,154.89 437.50,154.16 437.5,151.16 415.5,151.16" fill="#000"/>
<polygon points="415.50,295.19 416.60,295.38 417.70,295.67 418.80,296.03 419.90,296.42 421.00,296.86 422.10,297.32 423.20,297.82 424.30,298.34 425.40,298.88 426.50,299.44 427.60,300.03 428.70,300.63 429.80,301.25 430.90,301.89 432.00,302.54 433.10,303.21 434.20,303.90 435.30,304.60 436.40,305.31 437.50,306.04 437.5,309.04 415.5,309.04" fill="#000"/>
<rect x="436.85" y="155.97" width="1.3" height="148.26" fill="#383838"/>
<rect x="283.6" y="122.2" width="1.4" height="216.8" fill="#585858"/>
<polygon points="270.5,87.53 274,87.53 274,92.15" fill="#000"/>
<polygon points="270.5,372.67 274,372.67 274,368.05" fill="#000"/>
<polygon points="478.5,153.16 488,153.16 488,162.84" fill="#000"/>
<polygon points="478.5,307.04 488,307.04 488,297.36" fill="#000"/>
<rect x="397.7" y="37.5" width="116.8" height="27.1" fill="#737373"/>
<path d="M397.9 37.5 V64.8 H515" fill="none" stroke="#b8b840" stroke-width="1.4"/>
<polygon points="397.7,64.6 454.4,64.6 409.5,124 381.2,114 382.4,96 397.7,73.5" fill="#606064" stroke="#b8b840" stroke-width="1.3"/>
<polygon points="408.8,82.5 409.6,124 379.2,160.8 381.2,114" fill="#ffff00" stroke="#ffff00" stroke-width="0.6" stroke-linejoin="round"/>
<polygon points="391.6,121.3 392.95,118.9 395.65,118.9 397,121.3 395.65,123.7 392.95,123.7" fill="#585830" stroke="#404000" stroke-width="0.6"/>
<rect x="514.5" y="37.5" width="135.5" height="385" fill="#c6c6c6"/>
<rect x="514.2" y="37.5" width="1.6" height="384" fill="#a4a4a4"/>
<rect x="515.8" y="37.5" width="2" height="384" fill="#d4d4d4"/>
<rect x="517.8" y="38.1" width="130" height="1.1" fill="#303030"/>
<rect x="517.8" y="38.1" width="1.1" height="382" fill="#303030"/>
<rect x="646.3" y="37.7" width="1.3" height="382" fill="#303030"/>
<rect x="517.5" y="418.8" width="130" height="1.6" fill="#303030"/>
<rect x="519" y="39.2" width="126.5" height="1" fill="#d8d8d8"/>
<rect x="519" y="39.2" width="1" height="379" fill="#d8d8d8"/>
<rect x="521.2" y="51.2" width="39.2" height="1.1" fill="#303030"/>
<rect x="521.2" y="51.2" width="1.1" height="349" fill="#303030"/>
<rect x="521.2" y="399.2" width="39.8" height="1.1" fill="#303030"/>
<rect x="559.6" y="51.2" width="1.2" height="349" fill="#303030"/>
<rect x="546" y="66.8" width="13.6" height="146.5" fill="#14b23a"/>
<rect x="541.6" y="66.60" width="18.4" height="1.3" fill="#303030"/>
<text x="529.6" y="69.4" font-size="7" fill="#282828" font-family="Liberation Mono" textLength="3.6" lengthAdjust="spacingAndGlyphs" >4</text>
<rect x="541.6" y="103.38" width="18.4" height="1.3" fill="#303030"/>
<text x="529.6" y="106.18" font-size="7" fill="#282828" font-family="Liberation Mono" textLength="3.6" lengthAdjust="spacingAndGlyphs" >3</text>
<rect x="541.6" y="140.16" width="18.4" height="1.3" fill="#303030"/>
<text x="529.6" y="142.95999999999998" font-size="7" fill="#282828" font-family="Liberation Mono" textLength="3.6" lengthAdjust="spacingAndGlyphs" >2</text>
<rect x="541.6" y="176.94" width="18.4" height="1.3" fill="#303030"/>
<text x="529.6" y="179.74" font-size="7" fill="#282828" font-family="Liberation Mono" textLength="3.6" lengthAdjust="spacingAndGlyphs" >1</text>
<rect x="541.6" y="213.72" width="18.4" height="1.3" fill="#303030"/>
<text x="529.6" y="216.51999999999998" font-size="7" fill="#282828" font-family="Liberation Mono" textLength="3.6" lengthAdjust="spacingAndGlyphs" >0</text>
<rect x="551.6" y="85.09" width="8" height="1.1" fill="#a0dca0"/>
<rect x="551.6" y="121.87" width="8" height="1.1" fill="#a0dca0"/>
<rect x="551.6" y="158.65" width="8" height="1.1" fill="#204020"/>
<rect x="551.6" y="195.43" width="8" height="1.1" fill="#a0dca0"/>
<polygon points="555.2,159 559.6,154.6 559.6,163.8" fill="#f0f000"/>
<rect x="524.2" y="221" width="34.3" height="13.3" fill="#cacaca" stroke="#303030" stroke-width="1"/>
<text x="535" y="230.7" font-size="8.3" fill="#101010" font-family="Liberation Serif" font-weight="bold" textLength="19.4" lengthAdjust="spacingAndGlyphs" >1477</text>
<rect x="541.6" y="241.60" width="18.4" height="1.3" fill="#303030"/>
<text x="529.6" y="243.79999999999998" font-size="7" fill="#282828" font-family="Liberation Mono" textLength="3.6" lengthAdjust="spacingAndGlyphs" >0</text>
<rect x="541.6" y="278.58" width="18.4" height="1.3" fill="#303030"/>
<text x="529.6" y="280.78000000000003" font-size="7" fill="#282828" font-family="Liberation Mono" textLength="3.6" lengthAdjust="spacingAndGlyphs" >1</text>
<rect x="541.6" y="315.56" width="18.4" height="1.3" fill="#303030"/>
<text x="529.6" y="317.76" font-size="7" fill="#282828" font-family="Liberation Mono" textLength="3.6" lengthAdjust="spacingAndGlyphs" >2</text>
<rect x="541.6" y="352.54" width="18.4" height="1.3" fill="#303030"/>
<text x="529.6" y="354.74" font-size="7" fill="#282828" font-family="Liberation Mono" textLength="3.6" lengthAdjust="spacingAndGlyphs" >3</text>
<rect x="541.6" y="389.52" width="18.4" height="1.3" fill="#303030"/>
<text x="529.6" y="391.72" font-size="7" fill="#282828" font-family="Liberation Mono" textLength="3.6" lengthAdjust="spacingAndGlyphs" >4</text>
<rect x="551.6" y="260.19" width="8" height="1.1" fill="#303030"/>
<rect x="551.6" y="297.17" width="8" height="1.1" fill="#303030"/>
<rect x="551.6" y="334.15" width="8" height="1.1" fill="#303030"/>
<rect x="551.6" y="371.13" width="8" height="1.1" fill="#303030"/>
<path d="M564.6 53 L574.2 62.3 M574.2 53 L564.6 62.3" stroke="#000" stroke-width="1.5"/>
<rect x="577.2" y="51.3" width="55.40" height="16.40" fill="#d6d6d6"/>
<rect x="578.7" y="63.40" width="52.90" height="0.8" fill="#f4f4f4"/>
<rect x="578.7" y="52.5" width="0.9" height="14.00" fill="#f4f4f4"/>
<rect x="577.2" y="51.3" width="55.40" height="1.1" fill="#282828"/>
<rect x="577.2" y="51.3" width="1.3" height="16.40" fill="#282828"/>
<rect x="631.70" y="51.3" width="0.9" height="16.40" fill="#303030"/>
<rect x="577.2" y="66.60" width="55.40" height="1.1" fill="#303030"/>
<text x="593.3" y="60.7" font-size="10" fill="#101010" font-family="Liberation Mono" font-weight="bold" textLength="30.7" lengthAdjust="spacingAndGlyphs" >38.800</text>
<text x="573.8" y="79.8" font-size="7" fill="#202020" font-family="Liberation Mono" font-weight="bold" textLength="9.7" lengthAdjust="spacingAndGlyphs" >ΔX</text>
<rect x="588.8" y="71.4" width="43.80" height="12.20" fill="#d6d6d6"/>
<rect x="588.8" y="71.4" width="43.80" height="1.1" fill="#282828"/>
<rect x="588.8" y="71.4" width="1.3" height="12.20" fill="#282828"/>
<rect x="631.70" y="71.4" width="0.9" height="12.20" fill="#303030"/>
<rect x="588.8" y="82.50" width="43.80" height="1.1" fill="#303030"/>
<text x="610.5" y="80" font-size="7.5" fill="#202020" font-family="Liberation Mono" textLength="19.7" lengthAdjust="spacingAndGlyphs" >5.200</text>
<path d="M564.5 100.8 H573.2 L564.8 108.7 H573.8" fill="none" stroke="#000" stroke-width="1.6"/>
<rect x="577.2" y="98.2" width="55.40" height="16.80" fill="#d6d6d6"/>
<rect x="578.7" y="110.70" width="52.90" height="0.8" fill="#f4f4f4"/>
<rect x="578.7" y="99.4" width="0.9" height="14.40" fill="#f4f4f4"/>
<rect x="577.2" y="98.2" width="55.40" height="1.1" fill="#282828"/>
<rect x="577.2" y="98.2" width="1.3" height="16.80" fill="#282828"/>
<rect x="631.70" y="98.2" width="0.9" height="16.80" fill="#303030"/>
<rect x="577.2" y="113.90" width="55.40" height="1.1" fill="#303030"/>
<rect x="578.8" y="103.5" width="3.8" height="1" fill="#303030"/>
<text x="594" y="107.8" font-size="9.6" fill="#101010" font-family="Liberation Mono" font-weight="bold" textLength="29.6" lengthAdjust="spacingAndGlyphs" >30.000</text>
<text x="573" y="126.5" font-size="7" fill="#202020" font-family="Liberation Mono" font-weight="bold" textLength="10.5" lengthAdjust="spacingAndGlyphs" >ΔZ</text>
<rect x="588.3" y="117.7" width="44.30" height="12.90" fill="#d6d6d6"/>
<rect x="588.3" y="117.7" width="44.30" height="1.1" fill="#282828"/>
<rect x="588.3" y="117.7" width="1.3" height="12.90" fill="#282828"/>
<rect x="631.70" y="117.7" width="0.9" height="12.90" fill="#303030"/>
<rect x="588.3" y="129.50" width="44.30" height="1.1" fill="#303030"/>
<text x="607.2" y="127" font-size="7.5" fill="#202020" font-family="Liberation Mono" textLength="23.3" lengthAdjust="spacingAndGlyphs" >10.000</text>
<text x="562" y="282" font-size="9" fill="#101010" font-family="Liberation Serif" font-weight="bold" >F</text>
<rect x="572.5" y="264.5" width="37.5" height="12.5" fill="#d2d2d2" stroke="#303030" stroke-width="1.4"/>
<text x="575" y="273.5" font-size="7" fill="#202020" font-family="Liberation Mono" textLength="12" lengthAdjust="spacingAndGlyphs" >0.1</text>
<text x="612.2" y="274" font-size="7" fill="#303030" font-family="Liberation Mono" textLength="8" lengthAdjust="spacingAndGlyphs" >mm</text>
<rect x="572.5" y="280.5" width="37.5" height="12.0" fill="#d2d2d2" stroke="#303030" stroke-width="1.4"/>
<text x="575" y="289.5" font-size="7" fill="#202020" font-family="Liberation Mono" >0</text>
<text x="612.2" y="290" font-size="7" fill="#303030" font-family="Liberation Mono" textLength="8" lengthAdjust="spacingAndGlyphs" >mm</text>
<text x="562" y="313.5" font-size="9" fill="#101010" font-family="Liberation Serif" font-weight="bold" >S</text>
<rect x="572.5" y="303.5" width="37.5" height="12.5" fill="#d2d2d2" stroke="#303030" stroke-width="1.4"/>
<text x="575" y="312.5" font-size="7" fill="#202020" font-family="Liberation Mono" textLength="12" lengthAdjust="spacingAndGlyphs" >180</text>
<text x="613" y="313" font-size="6" fill="#202020" font-family="Liberation Mono" textLength="17" lengthAdjust="spacingAndGlyphs" >m/min</text>
<text x="562" y="345" font-size="9" fill="#101010" font-family="Liberation Serif" font-weight="bold" >T</text>
<rect x="572.5" y="334" width="37.5" height="13" fill="#d2d2d2" stroke="#303030" stroke-width="1.4"/>
<text x="575" y="343" font-size="7" fill="#202020" font-family="Liberation Mono" >3</text>
<rect x="572.5" y="388" width="37.700000000000045" height="11.800000000000011" fill="#d2d2d2" stroke="#303030" stroke-width="1.4"/>
<text x="575.5" y="397" font-size="7" fill="#202020" font-family="Liberation Mono" textLength="31.5" lengthAdjust="spacingAndGlyphs" >00:00:49</text>
<text x="612.3" y="397.5" font-size="7.5" fill="#202020" font-family="Liberation Mono" textLength="15" lengthAdjust="spacingAndGlyphs" >Zeit</text>
<rect x="649" y="0" width="1" height="422" fill="#303030"/>
<rect x="0" y="421.8" width="650" height="66.2" fill="#c0c0c0"/>
<rect x="1.5" y="424.9" width="645.7" height="60.5" fill="none" stroke="#2c46d0" stroke-width="3"/>
<rect x="0" y="423.4" width="648.7" height="1.1" fill="#6480ec"/>
<rect x="3" y="425.6" width="642.7" height="1.2" fill="#141e88"/>
<rect x="0" y="485.6" width="648.7" height="1.2" fill="#141e88"/>
<rect x="3.6" y="427.4" width="641.5" height="55.6" fill="none" stroke="#f0f0f0" stroke-width="0.8"/>
<rect x="3" y="438.6" width="511" height="1.1" fill="#8a8a8a"/>
<rect x="514.3" y="427" width="1.1" height="56.5" fill="#8a8a8a"/>
<rect x="515.4" y="427" width="1" height="56.5" fill="#f0f0f0"/>
<text x="7.5" y="437.3" font-size="9.5" fill="#101010" font-family="Liberation Mono" font-weight="bold" textLength="101" lengthAdjust="spacingAndGlyphs" >Simulation Folgesatz</text>
<rect x="10.1" y="442.6" width="17.4" height="12.299999999999955" fill="#303030"/>
<rect x="11.1" y="443.6" width="14.899999999999999" height="9.299999999999955" fill="#f4f4f4"/>
<rect x="12.1" y="444.6" width="13.899999999999999" height="8.299999999999955" fill="#e4e4ec"/>
<text x="13.5" y="451.59999999999997" font-size="8.6" fill="#4868f0" font-family="Liberation Mono" font-weight="bold" textLength="10.799999999999999" lengthAdjust="spacingAndGlyphs" >F1</text>
<rect x="10.1" y="456.4" width="17.4" height="11.800000000000011" fill="#303030"/>
<rect x="11.1" y="457.4" width="14.899999999999999" height="8.800000000000011" fill="#f4f4f4"/>
<rect x="12.1" y="458.4" width="13.899999999999999" height="7.800000000000011" fill="#e4e4ec"/>
<text x="13.5" y="464.9" font-size="8.6" fill="#4868f0" font-family="Liberation Mono" font-weight="bold" textLength="10.799999999999999" lengthAdjust="spacingAndGlyphs" >F3</text>
<rect x="10.1" y="469.8" width="17.4" height="11.699999999999989" fill="#303030"/>
<rect x="11.1" y="470.8" width="14.899999999999999" height="8.699999999999989" fill="#f4f4f4"/>
<rect x="12.1" y="471.8" width="13.899999999999999" height="7.699999999999989" fill="#e4e4ec"/>
<text x="13.5" y="478.2" font-size="8.6" fill="#4868f0" font-family="Liberation Mono" font-weight="bold" textLength="10.799999999999999" lengthAdjust="spacingAndGlyphs" >F5</text>
<text x="30.7" y="452" font-size="9.5" fill="#101010" font-family="Liberation Mono" font-weight="bold" textLength="50.5" lengthAdjust="spacingAndGlyphs" >Einzelsatz</text>
<text x="30.7" y="465.5" font-size="9.5" fill="#101010" font-family="Liberation Mono" font-weight="bold" textLength="50.5" lengthAdjust="spacingAndGlyphs" >3D-Ansicht</text>
<text x="30.7" y="479" font-size="9.5" fill="#101010" font-family="Liberation Mono" font-weight="bold" textLength="25.5" lengthAdjust="spacingAndGlyphs" >Innen</text>
<rect x="163" y="442.6" width="17.5" height="12.299999999999955" fill="#303030"/>
<rect x="164" y="443.6" width="15.0" height="9.299999999999955" fill="#f4f4f4"/>
<rect x="165" y="444.6" width="14.0" height="8.299999999999955" fill="#e4e4ec"/>
<text x="166.4" y="451.59999999999997" font-size="8.6" fill="#4868f0" font-family="Liberation Mono" font-weight="bold" textLength="10.9" lengthAdjust="spacingAndGlyphs" >F2</text>
<text x="183" y="452" font-size="9.5" fill="#101010" font-family="Liberation Mono" font-weight="bold" textLength="40.5" lengthAdjust="spacingAndGlyphs" >Echtzeit</text>
<rect x="163" y="456.4" width="17.5" height="11.800000000000011" fill="#303030"/>
<rect x="164" y="457.4" width="15.0" height="8.800000000000011" fill="#f4f4f4"/>
<rect x="165" y="458.4" width="14.0" height="7.800000000000011" fill="#d0d0d0"/>
<rect x="167.5" y="461.3" width="8" height="1.4" fill="#101010"/><rect x="170.8" y="458.3" width="1.4" height="7.6" fill="#101010"/>
<rect x="182" y="456.4" width="17.5" height="11.800000000000011" fill="#303030"/>
<rect x="183" y="457.4" width="15.0" height="8.800000000000011" fill="#f4f4f4"/>
<rect x="184" y="458.4" width="14.0" height="7.800000000000011" fill="#d0d0d0"/>
<rect x="186.5" y="461.3" width="8" height="1.4" fill="#101010"/>
<text x="201.5" y="465.5" font-size="9.5" fill="#101010" font-family="Liberation Mono" font-weight="bold" textLength="40.5" lengthAdjust="spacingAndGlyphs" >Override</text>
<rect x="443.3" y="440.7" width="40.4" height="41" fill="none" stroke="#e8e8e8" stroke-width="0.8"/>
<rect x="443.8" y="441.2" width="40.4" height="41" fill="none" stroke="#a0a0a0" stroke-width="0.6"/>
<rect x="443.3" y="441.9" width="17.19999999999999" height="11.900000000000034" fill="#303030"/>
<rect x="444.3" y="442.9" width="14.699999999999989" height="8.900000000000034" fill="#f4f4f4"/>
<rect x="445.3" y="443.9" width="13.699999999999989" height="7.900000000000034" fill="#e4e4ec"/>
<text x="446.7" y="450.5" font-size="8.6" fill="#4868f0" font-family="Liberation Mono" font-weight="bold" textLength="10.599999999999989" lengthAdjust="spacingAndGlyphs" >F8</text>
<path d="M463.8 453.2 L473.3 462.7 L463.8 472.2 L454.3 462.7 Z" fill="none" stroke="#108838" stroke-width="2.5"/>
<path d="M463.2 456 L464.4 469.2" stroke="#0c5020" stroke-width="1.9"/>
<text x="453.8" y="479.6" font-size="8" fill="#101010" font-family="Liberation Sans" textLength="18.6" lengthAdjust="spacingAndGlyphs" stroke="#101010" stroke-width="0.3">START</text>
<rect x="519.3" y="429" width="17.80" height="26.50" fill="#303030"/>
<rect x="520.3" y="430" width="15.30" height="23.50" fill="#f8f8f8"/>
<rect x="521.3" y="431" width="14.30" height="22.50" fill="#e8e8ec"/>
<text x="521.8" y="437.7" font-size="7.4" fill="#3a5ae8" font-family="Liberation Serif" font-weight="bold" textLength="12.9" lengthAdjust="spacingAndGlyphs" >Esc</text>
<path d="M522.6 440.6 L532.4 450.6 M532.4 440.6 L522.6 450.6" stroke="#e42020" stroke-width="3.2"/>
<rect x="519.3" y="457.4" width="17.80" height="24.80" fill="#303030"/>
<rect x="520.3" y="458.4" width="15.30" height="21.80" fill="#f8f8f8"/>
<rect x="521.3" y="459.4" width="14.30" height="20.80" fill="#e8e8ec"/>
<text x="521.8" y="466.09999999999997" font-size="7.4" fill="#3a5ae8" font-family="Liberation Serif" font-weight="bold" textLength="12.4" lengthAdjust="spacingAndGlyphs" >F10</text>
<path d="M522.4 473.2 L526.2 478.2 L533.8 469" fill="none" stroke="#12a040" stroke-width="3.2"/>
<text x="539.8" y="445.5" font-size="9.5" fill="#101010" font-family="Liberation Mono" font-weight="bold" textLength="46" lengthAdjust="spacingAndGlyphs" >Abbrechen</text>
<text x="539.8" y="472.5" font-size="9.5" fill="#101010" font-family="Liberation Mono" font-weight="bold" textLength="10" lengthAdjust="spacingAndGlyphs" >OK</text>
</svg>
</body></html>
